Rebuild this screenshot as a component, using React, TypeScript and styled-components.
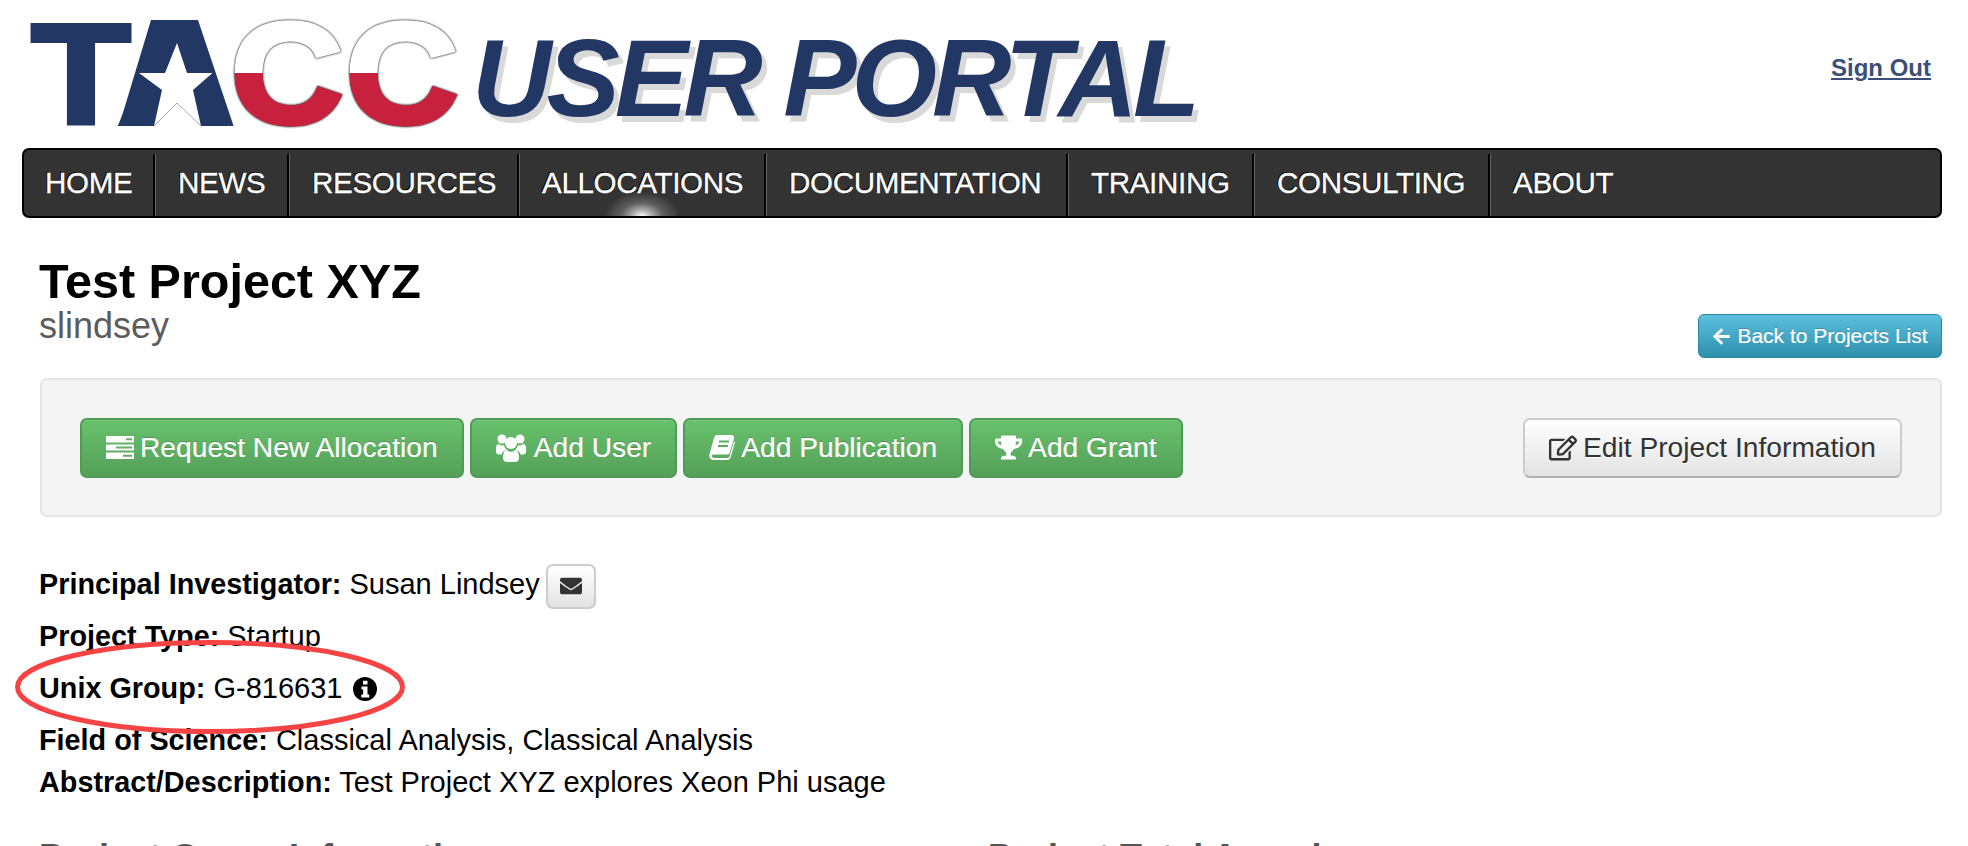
import styled, { createGlobalStyle } from "styled-components";
import { FaArrowLeft, FaEnvelope, FaRegEdit, FaTrophy } from "react-icons/fa";

const NAV_ITEMS = [
  { label: "HOME", width: 131 },
  { label: "NEWS", width: 134 },
  { label: "RESOURCES", width: 230 },
  { label: "ALLOCATIONS", width: 247 },
  { label: "DOCUMENTATION", width: 302 },
  { label: "TRAINING", width: 186 },
  { label: "CONSULTING", width: 236 },
  { label: "ABOUT", width: 200 },
];

const GlobalStyle = createGlobalStyle`
  html, body {
    margin: 0;
    background: #fff;
    overflow: hidden;
  }
  body {
    font-family: "Liberation Sans", Arial, sans-serif;
    color: #000;
  }
`;

function TasksIcon() {
  return (
    <svg width="28" height="23" viewBox="0 0 28 23" fill="#fff">
      <path
        fillRule="evenodd"
        d="M0 0h28v6.500H0zM20 2.200v2h6v-2zM0 8.500h28v6H0zM10 10.500v2h16v-2zM0 16.500h28V23H0zM17 18.700v2h9v-2z"
      />
    </svg>
  );
}

function UsersIcon() {
  return (
    <svg width="32" height="28" viewBox="0 0 32 28" fill="#fff">
      <circle cx="6" cy="5" r="4.500" />
      <circle cx="24" cy="5" r="4.500" />
      <circle cx="15" cy="9" r="6" />
      <path d="M0 14c0-2 1-4 3-4 1 1 2 1.500 3 1.500s1.500 0 2-.5c.3 2 1.500 4 3 5-3 .5-5 2-5.500 4.500H3c-2 0-3-1-3-3z" />
      <path d="M30 14c0-2-1-4-3-4-1 1-2 1.500-3 1.500s-1.500 0-2-.5c-.3 2-1.500 4-3 5 3 .5 5 2 5.500 4.500H27c2 0 3-1 3-3z" />
      <path d="M7 24c0-4 1-8 4-8 1 1 2.500 1.800 4 1.800s3-.8 4-1.800c3 0 4 4 4 8 0 2.500-1.500 4-4 4h-8c-2.500 0-4-1.500-4-4z" />
    </svg>
  );
}

function BookIcon() {
  return (
    <svg width="26" height="25" viewBox="0 0 26 25" fill="#fff">
      <path d="M8 0h14c2.500 0 3.500 1.500 3 3.500L21 17c-.5 2-1.500 2.500-3.500 2.500H5.500c-2 0-3 .7-2.500 2s1.500 1.500 2.500 1.500h13c1.200 0 1.700-.6 2-1.500L25.200 6l.8 1.500L21.800 22c-.6 2-2 3-4 3H5c-3.500 0-5.500-2.500-4.500-6L5 3c.5-2 1.500-3 3-3z" />
      <path d="M10 6.500h10M9 11h10" stroke="#5aa95f" strokeWidth="2" />
    </svg>
  );
}

function InfoIcon() {
  return (
    <InfoSvg width="24" height="24" viewBox="0 0 24 24">
      <circle cx="12" cy="12" r="12" fill="#000" />
      <path
        fill="#fff"
        d="M10 3.800h4.500v3.700H10zM8.500 9.500h6v8h1.800V20.500H8.300v-3h1.900v-5H8.500z"
      />
    </InfoSvg>
  );
}

function TaccLogo() {
  return (
    <LogoSvg width="430" height="116" viewBox="0 0 430 116">
      <defs>
        <linearGradient id="texas" gradientUnits="userSpaceOnUse" x1="0" y1="0" x2="0" y2="116">
          <stop offset="0.509" stopColor="#fff" />
          <stop offset="0.509" stopColor="#c8213d" />
        </linearGradient>
      </defs>
      <LogoLetter x="1" y="110" textLength="100" lengthAdjust="spacingAndGlyphs">T</LogoLetter>
      <polygon points="121,6 168,6 203.600,112 89,112" fill="#223763" />
      <LogoLetter x="87" y="110" textLength="116" lengthAdjust="spacingAndGlyphs">A</LogoLetter>
      <polygon
        points="147,29 157,59 182.500,59 163,76 171,112 124,112 132,76 109,59 135,59"
        fill="#fff"
      />
      <polyline points="124,112 147,89 171,112" fill="none" stroke="#aaa" strokeWidth="1" />
      <LogoC x="201" y="109" textLength="112" lengthAdjust="spacingAndGlyphs">C</LogoC>
      <LogoC x="316" y="109" textLength="112" lengthAdjust="spacingAndGlyphs">C</LogoC>
    </LogoSvg>
  );
}

export default function App() {
  return (
    <Page>
      <GlobalStyle />
      <Header>
        <Brand>
          <TaccLogo />
          <PortalTitle>USER PORTAL</PortalTitle>
        </Brand>
        <SignOut href="#">Sign Out</SignOut>
      </Header>

      <NavBar>
        {NAV_ITEMS.map(({ label, width }) => (
          <NavItem key={label} $width={width} $active={label === "ALLOCATIONS"}>
            {label}
          </NavItem>
        ))}
      </NavBar>

      <Content>
        <TitleRow>
          <TitleBlock>
            <Title>Test Project XYZ</Title>
            <Subtitle>slindsey</Subtitle>
          </TitleBlock>
          <BackButton>
            <FaArrowLeft size={19} /> Back to Projects List
          </BackButton>
        </TitleRow>

        <Well>
          <ButtonGroup>
            <GreenButton>
              <TasksIcon /> Request New Allocation
            </GreenButton>
            <GreenButton>
              <UsersIcon /> Add User
            </GreenButton>
            <GreenButton>
              <BookIcon /> Add Publication
            </GreenButton>
            <GreenButton>
              <FaTrophy size={27} /> Add Grant
            </GreenButton>
          </ButtonGroup>
          <EditButton>
            <FaRegEdit size={28} /> Edit Project Information
          </EditButton>
        </Well>

        <InfoList>
          <InfoRow>
            <b>Principal Investigator:</b> Susan Lindsey{" "}
            <MailButton>
              <FaEnvelope size={22} />
            </MailButton>
          </InfoRow>
          <InfoRow>
            <b>Project Type:</b> Startup
          </InfoRow>
          <InfoRow>
            <b>Unix Group:</b> G-816631 <InfoIcon />
          </InfoRow>
          <InfoRow>
            <b>Field of Science:</b> Classical Analysis, Classical Analysis
          </InfoRow>
          <CompactRow>
            <b>Abstract/Description:</b> Test Project XYZ explores Xeon Phi usage
          </CompactRow>
          <Highlight width="400" height="100" viewBox="0 0 400 100">
            <ellipse cx="199" cy="50" rx="192.500" ry="44.500" fill="none" stroke="#f64444" strokeWidth="5" />
          </Highlight>
        </InfoList>

        <Columns>
          <SectionTitle>Project Group Information</SectionTitle>
          <SectionTitle>Project Total Awards</SectionTitle>
        </Columns>
      </Content>
    </Page>
  );
}

const Page = styled.div`
  width: 1968px;
  height: 846px;
  overflow: hidden;
  padding: 0 26px 0 22px;
  box-sizing: border-box;
`;

const Header = styled.header`
  display: flex;
  justify-content: space-between;
  align-items: flex-start;
  height: 148px;
  padding: 14px 11px 0 8px;
  box-sizing: border-box;
`;

const Brand = styled.div`
  display: flex;
  align-items: flex-start;
`;

const LogoSvg = styled.svg`
  flex: none;
  display: block;
`;

const LogoLetter = styled.text`
  font-family: "Liberation Sans", Arial, sans-serif;
  font-weight: bold;
  font-size: 143px;
  fill: #223763;
  stroke: #223763;
  stroke-width: 4px;
`;

const LogoC = styled(LogoLetter)`
  fill: url(#texas);
  stroke: url(#texas);
  stroke-width: 5px;
  filter: drop-shadow(0 0 1px #555) drop-shadow(0 0 0.4px #555);
`;

const PortalTitle = styled.div`
  margin: 1px 0 0 12px;
  font-size: 110px;
  line-height: 126px;
  font-weight: bold;
  font-style: italic;
  letter-spacing: -5px;
  color: #223763;
  text-shadow: 5px 6px 0 #d9d9d9;
  white-space: nowrap;
`;

const SignOut = styled.a`
  margin-top: 40px;
  font-size: 24px;
  line-height: 28px;
  font-weight: bold;
  color: #3d4e78;
`;

const NavBar = styled.nav`
  display: flex;
  height: 70px;
  padding-top: 4px;
  box-sizing: border-box;
  background: #333;
  border: 2px solid #000;
  border-radius: 7px;
`;

const NavItem = styled.div<{ $width: number; $active?: boolean }>`
  position: relative;
  overflow: hidden;
  box-sizing: border-box;
  width: ${({ $width }) => $width}px;
  padding-left: 23px;
  line-height: 58px;
  font-size: 29.5px;
  letter-spacing: -0.3px;
  color: #fff;
  text-shadow: -1px -1px 0 #000;
  -webkit-text-stroke: 0.3px #fff;
  border-right: 2px solid #000;
  box-shadow: 1px 0 0 #666;

  &:first-child {
    padding-left: 21px;
  }

  &:last-child {
    border-right: none;
    box-shadow: none;
  }

  ${({ $active }) =>
    $active &&
    `
    &::after {
      content: "";
      position: absolute;
      left: 50%;
      bottom: -24px;
      width: 76px;
      height: 48px;
      transform: translateX(-50%);
      background: radial-gradient(closest-side, #fff 0%, rgba(255, 255, 255, 0.6) 25%, rgba(255, 255, 255, 0.22) 55%, rgba(255, 255, 255, 0) 100%);
    }
  `}
`;

const Content = styled.main`
  padding-left: 17px;
`;

const TitleRow = styled.div`
  display: flex;
  justify-content: space-between;
  align-items: flex-end;
  height: 160px;
  padding-bottom: 20px;
  box-sizing: border-box;
`;

const TitleBlock = styled.div`
  margin-bottom: 12px;
`;

const Title = styled.h1`
  margin: 0;
  font-size: 48.5px;
  line-height: 50px;
  font-weight: bold;
`;

const Subtitle = styled.div`
  font-size: 36px;
  line-height: 40px;
  color: #5c5c5c;
`;

const Button = styled.button`
  display: inline-flex;
  align-items: center;
  justify-content: center;
  gap: 6px;
  box-sizing: border-box;
  font-family: inherit;
  white-space: nowrap;
  cursor: pointer;
`;

const BackButton = styled(Button)`
  width: 244px;
  height: 44px;
  padding: 0;
  font-size: 21px;
  color: #fff;
  text-shadow: 0 -1px 0 rgba(0, 0, 0, 0.2);
  -webkit-text-stroke: 0.2px #fff;
  background: linear-gradient(#5bc0de, #2f90ad);
  border: 1px solid #2b87a3;
  border-radius: 6px;
`;

const Well = styled.section`
  display: flex;
  justify-content: space-between;
  align-items: center;
  height: 139px;
  margin-left: 1px;
  padding: 0 38px;
  box-sizing: border-box;
  background: #f4f4f4;
  border: 2px solid #e4e4e4;
  border-radius: 7px;
`;

const ButtonGroup = styled.div`
  display: flex;
  gap: 6px;
`;

const GreenButton = styled(Button)`
  height: 60px;
  padding: 0 24px;
  font-size: 28.2px;
  color: #fff;
  text-shadow: 0 -1px 0 rgba(0, 0, 0, 0.2);
  -webkit-text-stroke: 0.2px #fff;
  background: linear-gradient(#68c16d, #55a059);
  border: 2px solid #4f9a54;
  border-radius: 7px;
  box-shadow: inset 0 1px 0 rgba(255, 255, 255, 0.15);
`;

const EditButton = styled(Button)`
  height: 60px;
  width: 379px;
  padding: 0;
  font-size: 28.2px;
  color: #333;
  text-shadow: 0 1px 0 #fff;
  background: linear-gradient(#fff, #e3e3e3);
  border: 2px solid #ccc;
  border-bottom-color: #b0b0b0;
  border-radius: 7px;
`;

const InfoList = styled.div`
  position: relative;
  margin-top: 41px;
  font-size: 29px;

  b {
    font-size: 28.8px;
  }
`;

const InfoRow = styled.div`
  line-height: 52px;
  height: 52px;
  white-space: nowrap;
`;

const CompactRow = styled(InfoRow)`
  line-height: 33px;
  height: 33px;
`;

const InfoSvg = styled.svg`
  vertical-align: -3px;
  margin-left: 3px;
`;

const MailButton = styled(Button)`
  width: 50px;
  height: 45px;
  margin-left: -2px;
  padding: 0;
  vertical-align: middle;
  color: #333;
  background: linear-gradient(#fff, #e3e3e3);
  border: 2px solid #ccc;
  border-radius: 7px;
`;

const Highlight = styled.svg`
  position: absolute;
  left: -28px;
  top: 79px;
`;

const Columns = styled.div`
  display: grid;
  grid-template-columns: 949px 1fr;
  margin-top: 39px;
`;

const SectionTitle = styled.h2`
  margin: 0;
  font-size: 36px;
  line-height: 40px;
  font-weight: bold;
  color: #555;
`;
